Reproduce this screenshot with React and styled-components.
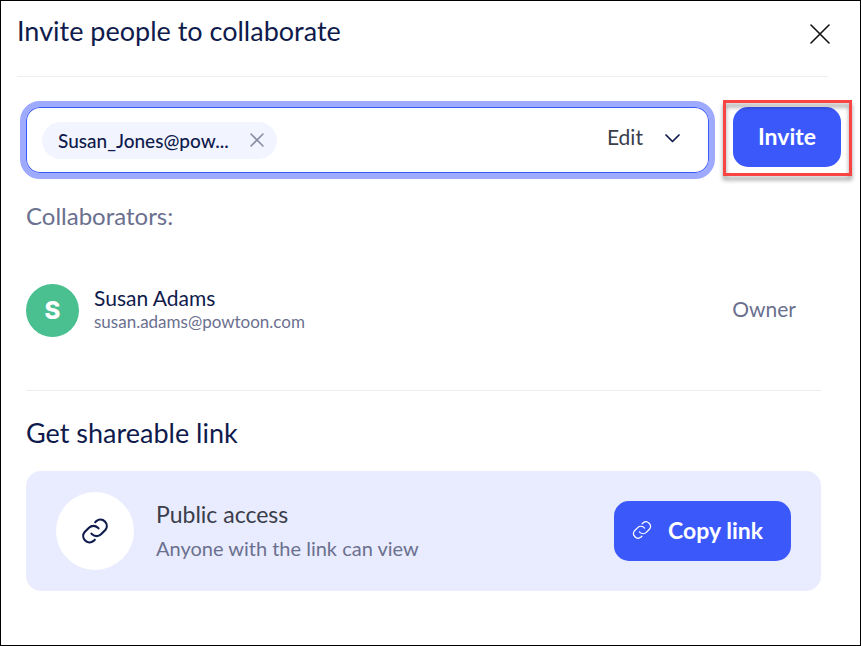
import React from "react";
import styled, { createGlobalStyle } from "styled-components";

const colors = {
  navy: "#0f1b4c",
  text: "#3a3d4a",
  muted: "#6b708f",
  blue: "#3b58fb",
  ring: "#9daafd",
  chip: "#f2f5ff",
  panel: "#e9ecfe",
  line: "#ededf0",
  green: "#4abf8f",
  red: "#f94444",
};

const GlobalStyle = createGlobalStyle`
  * { box-sizing: border-box; }
  body { margin: 0; background: #fff; font-family: Lato, "Open Sans", sans-serif; color: ${colors.navy}; }
  button, input, select { font: inherit; color: inherit; }
  h1, h2, p { margin: 0; font-weight: 400; }
`;

const Dialog = styled.main`
  min-height: 100vh;
  border: 1px solid #000;
  background: #fff;
`;

const Header = styled.header`
  display: flex;
  justify-content: space-between;
  height: 76px;
  margin: 0 32px 24px 16px;
  padding-top: 12px;
  border-bottom: 1px solid ${colors.line};
`;

const Title = styled.h1`
  && { font-size: 27px; line-height: 36px; }
`;

const IconButton = styled.button`
  display: grid;
  place-items: center;
  flex: none;
  width: 20px;
  height: 20px;
  padding: 0;
  border: 0;
  background: none;
  cursor: pointer;
  color: ${(p) => p.$color};
`;

const CloseButton = styled(IconButton)`
  margin: 11px -2px 0 0;
`;

const InviteRow = styled.form`
  display: flex;
  align-items: flex-start;
  gap: 18px;
  padding: 0 19px 0 19px;
`;

const Field = styled.div`
  display: flex;
  flex: 1;
  align-items: center;
  min-width: 0;
  height: 78px;
  padding: 0 22px 0 16px;
  border: 6px solid ${colors.ring};
  border-radius: 20px;
  box-shadow: inset 0 0 0 1px ${colors.blue};
`;

const Chip = styled.span`
  display: flex;
  align-items: center;
  flex: none;
  gap: 18px;
  height: 37px;
  padding: 0 10px 0 16px;
  border-radius: 19px;
  background: ${colors.chip};
  font-size: 19px;
  font-weight: 500;
`;

const EmailInput = styled.input`
  flex: 1;
  min-width: 0;
  height: 40px;
  border: 0;
  outline: 0;
  background: none;
  font-size: 19px;
`;

const SelectWrap = styled.div`
  display: grid;
  align-items: center;
  flex: none;
  width: 80px;

  > * { grid-area: 1 / 1; }
  > svg { justify-self: end; pointer-events: none; }
`;

const Select = styled.select`
  width: 100%;
  height: 40px;
  padding: 0 0 4px;
  border: 0;
  appearance: none;
  background: none;
  font-size: 21px;
  color: ${colors.text};
`;

const SelectSlot = styled.div`
  padding-bottom: 4px;
`;

const PrimaryButton = styled.button`
  display: flex;
  align-items: center;
  justify-content: center;
  flex: none;
  gap: 16px;
  height: 60px;
  padding: 0 ${(p) => p.$right}px 2px ${(p) => p.$left}px;
  border: 0;
  border-radius: 15px;
  background: ${colors.blue};
  color: #fff;
  font-size: 23px;
  font-weight: 700;
  cursor: pointer;
`;

const Highlighted = styled.div`
  position: relative;
  flex: none;
  margin-top: 6px;

  &::after {
    content: "";
    position: absolute;
    inset: -7px -11px -9px -10px;
    border: 3px solid ${colors.red};
    filter: drop-shadow(0 4px 2px rgba(0, 0, 0, 0.4));
    pointer-events: none;
  }
`;

const Content = styled.div`
  padding: 0 39px 54px 25px;
`;

const SectionLabel = styled.h2`
  && { font-size: 24px; line-height: 30px; }
  padding-top: 22px;
  color: ${colors.muted};
`;

const Person = styled.div`
  display: flex;
  align-items: center;
  gap: 15px;
  padding: 53px 25px 53px 0;
  border-bottom: 1px solid ${colors.line};
`;

const Avatar = styled.div`
  display: grid;
  place-items: center;
  flex: none;
  width: 53px;
  height: 53px;
  border-radius: 50%;
  background: ${colors.green};
  color: #fff;
  font-family: Inter, sans-serif;
  font-size: 24px;
  font-weight: 800;
`;

const Lines = styled.div`
  flex: 1;
  min-width: 0;
`;

const PersonLines = styled(Lines)`
  padding-bottom: 4px;
`;

const PersonName = styled.p`
  font-size: 21px;
  line-height: 26px;
`;

const PersonEmail = styled.p`
  font-size: 17px;
  line-height: 22px;
  color: ${colors.muted};
`;

const Role = styled.span`
  padding-bottom: 4px;
  font-size: 21px;
  color: ${colors.muted};
`;

const LinkHeading = styled.h2`
  && { font-size: 27px; line-height: 36px; }
  padding: 24px 0 20px;
`;

const LinkPanel = styled.section`
  display: flex;
  align-items: center;
  gap: 22px;
  padding: 21px 30px;
  border-radius: 15px;
  background: ${colors.panel};
`;

const LinkBadge = styled.div`
  display: grid;
  place-items: center;
  flex: none;
  width: 78px;
  height: 78px;
  border-radius: 50%;
  background: #fff;
`;

const AccessTitle = styled.p`
  font-size: 23px;
  line-height: 34px;
  color: ${colors.text};
`;

const AccessNote = styled.p`
  font-size: 20px;
  line-height: 34px;
  color: ${colors.muted};
`;

function CrossIcon({ size, stroke }) {
  return (
    <svg width={size} height={size} viewBox={`0 0 ${size} ${size}`} fill="none" stroke="currentColor" strokeWidth={stroke} aria-hidden="true">
      <path d={`M1 1L${size - 1} ${size - 1}M${size - 1} 1L1 ${size - 1}`} strokeLinecap="round" />
    </svg>
  );
}

function ChainIcon({ size, stroke }) {
  return (
    <svg width={size} height={size} viewBox="0 0 26 26" fill="none" stroke="currentColor" strokeWidth={stroke} strokeLinecap="round" strokeLinejoin="round" aria-hidden="true">
      <path d="M13.2 4.9l1.1-1.1a5.9 5.9 0 0 1 8.3 8.3l-4 4a5.9 5.9 0 0 1-8.3 0l-.6-.7" />
      <path d="M12.8 21.1l-1.1 1.1a5.9 5.9 0 0 1-8.3-8.3l4-4a5.9 5.9 0 0 1 8.3 0l.6.7" />
    </svg>
  );
}

export default function App() {
  return (
    <>
      <GlobalStyle />
      <Dialog>
        <Header>
          <Title>Invite people to collaborate</Title>
          <CloseButton type="button" aria-label="Close" $color="#111">
            <CrossIcon size={20} stroke={1.6} />
          </CloseButton>
        </Header>
        <InviteRow onSubmit={(e) => e.preventDefault()}>
          <Field>
            <Chip>
              Susan_Jones@pow...
              <IconButton type="button" aria-label="Remove Susan_Jones" $color="#898da3">
                <CrossIcon size={14} stroke={1.6} />
              </IconButton>
            </Chip>
            <EmailInput type="email" aria-label="Email address" />
            <SelectSlot>
              <SelectWrap>
                <Select aria-label="Permission" defaultValue="Edit">
                  <option>Edit</option>
                  <option>View</option>
                </Select>
                <svg width="30" height="10" viewBox="0 0 30 10" fill="none" stroke={colors.navy} strokeWidth="1.7" strokeLinecap="round" strokeLinejoin="round" aria-hidden="true">
                  <path d="M9 2l6.5 6.5L22 2" />
                </svg>
              </SelectWrap>
            </SelectSlot>
          </Field>
          <Highlighted>
            <PrimaryButton type="submit" $left={25} $right={25}>Invite</PrimaryButton>
          </Highlighted>
        </InviteRow>
        <Content>
          <SectionLabel>Collaborators:</SectionLabel>
          <Person>
            <Avatar aria-hidden="true">S</Avatar>
            <PersonLines>
              <PersonName>Susan Adams</PersonName>
              <PersonEmail>susan.adams@powtoon.com</PersonEmail>
            </PersonLines>
            <Role>Owner</Role>
          </Person>
          <LinkHeading>Get shareable link</LinkHeading>
          <LinkPanel>
            <LinkBadge>
              <ChainIcon size={28} stroke={2} />
            </LinkBadge>
            <Lines>
              <AccessTitle>Public access</AccessTitle>
              <AccessNote>Anyone with the link can view</AccessNote>
            </Lines>
            <PrimaryButton type="button" $left={18} $right={28}>
              <ChainIcon size={20} stroke={1.6} />
              Copy link
            </PrimaryButton>
          </LinkPanel>
        </Content>
      </Dialog>
    </>
  );
}
